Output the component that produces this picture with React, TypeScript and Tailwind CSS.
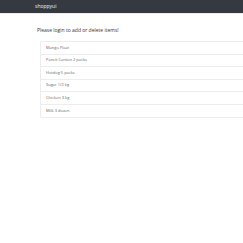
const items = [
  "Mango Float",
  "Pancit Canton 2 packs",
  "Hotdog 5 packs",
  "Sugar 1/2 kg",
  "Chicken 3 kg",
  "Milk 3 dozen",
];

export default function App() {
  return (
    <div className="min-h-[243px] w-[243px] overflow-hidden bg-white font-['Open_Sans',sans-serif] text-[#212529]">
      <nav className="flex h-[14px] items-center border-b border-[#ececec] bg-[#343a40] pl-[35px]">
        <span className="text-[5px] leading-none text-[#f2f2f2]">shoppyui</span>
      </nav>

      <div className="pl-[37px]">
        <p className="mt-[13px] text-[5px] leading-[7px] text-[#333]">
          Please login to add or delete items!
        </p>

        <ul className="ml-[3px] mt-[7px] w-[260px] rounded-[1px] border border-[#ededed]">
          {items.map((item, i) => (
            <li
              key={item}
              className={`flex h-[12.5px] items-center pl-[5px] text-[4px] leading-none text-[#666] ${
                i < items.length - 1 ? "border-b border-[#ededed]" : ""
              }`}
            >
              {item}
            </li>
          ))}
        </ul>
      </div>
    </div>
  );
}
